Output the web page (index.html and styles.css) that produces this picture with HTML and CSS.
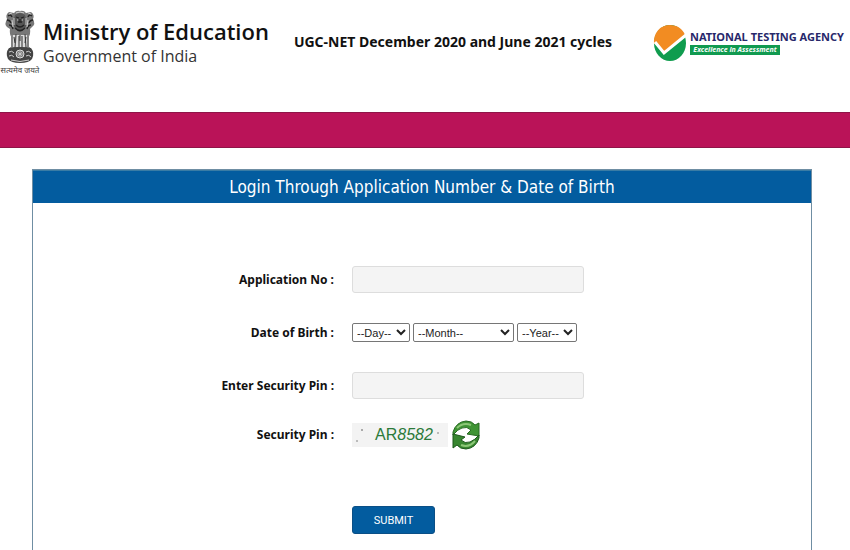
FILE: index.html
```
<!DOCTYPE html>
<html lang="en">
<head>
    <meta charset="utf-8">
    <title>UGC-NET Login</title>
    <link rel="stylesheet" href="styles.css">
</head>
<body>
    <header class="header">
        <div class="ministry">
            <div class="emblem">
                <svg viewBox="0 0 32 54" width="32" height="54" aria-hidden="true">
                    <!-- lions -->
                    <path d="M10 3Q12 0 16 1Q20 0 22 3L27 2Q31 5 29 9Q32 14 28 17L26 19Q27 24 24 28H8Q5 24 6 19L3 17Q0 14 3 9Q1 5 5 2Z" fill="#777"/>
                    <path d="M11 5Q16 1 21 5L23 12Q22 20 16 22Q10 20 9 12Z" fill="#555"/>
                    <path d="M12 7l3 1M17 8l3-1M14 12h4M16 9v3M12 15q4 4 8 0M11 18q5 5 10 0M4 6q3-2 4 1M28 6q-3-2-4 1M3 10q3 0 4 3M29 10q-3 0-4 3M5 15q3 0 4 4M27 15q-3 0-4 4" fill="none" stroke="#222" stroke-width="1.3"/>
                    <path d="M12 3q4-2 8 0M5 4l3-1M24 3l3 1M10 8v7M22 8v7M13 10h1M18 10h1M8 10l1 7M24 10l-1 7" fill="none" stroke="#ccc" stroke-width="1"/>
                    <!-- legs -->
                    <path d="M7 25h18v14H7z" fill="#ddd"/>
                    <path d="M8 25v12M12 24l-1 14M15 26v12M18 26v12M21 24l1 14M24 25v12" stroke="#555" stroke-width="1.3"/>
                    <path d="M10 27l1 6M16 25v6M22 27l-1 6M6 38h20" stroke="#333" stroke-width="1"/>
                    <!-- base with the wheel -->
                    <path d="M5 38Q16 36 27 38Q31 43 28 49Q25 53 16 53Q7 53 4 49Q1 43 5 38Z" fill="#444"/>
                    <circle cx="16" cy="44" r="4" fill="#777" stroke="#ddd"/>
                    <path d="M16 41v6M13 44h6M14 42l4 4M18 42l-4 4" stroke="#ddd" stroke-width=".6"/>
                    <path d="M5 42q3-2 5 1M5 46q3-2 5 1M22 42q3-2 5 1M22 46q3-2 5 1M7 50q9 3 18 0" fill="none" stroke="#ccc"/>
                </svg>
                <span class="motto" lang="hi">सत्यमेव जयते</span>
            </div>
            <div>
                <div class="ministry-name">Ministry of Education</div>
                <div class="ministry-gov">Government of India</div>
            </div>
        </div>
        <h1 class="exam-title">UGC-NET December 2020 and June 2021 cycles</h1>
        <div class="agency">
            <svg viewBox="0 0 34 38" width="34" height="38" aria-hidden="true">
                <ellipse cx="17" cy="19" rx="16" ry="18" fill="#0f9c4e"/>
                <path d="M1 20C0 9 7 1 17 1C24 1 30 5 32 11L11 28L3 19Z" fill="#f28c22"/>
                <path d="M2 18L11 29L33 11" fill="none" stroke="#fff" stroke-width="3"/>
            </svg>
            <div>
                <div class="agency-name">NATIONAL TESTING AGENCY</div>
                <div class="agency-tag">Excellence in Assessment</div>
            </div>
        </div>
    </header>

    <div class="band"></div>

    <main class="login">
        <h2 class="login-title">Login Through Application Number &amp; Date of Birth</h2>
        <form class="login-form">
            <div class="row">
                <label class="label" for="app-no">Application No :</label>
                <input class="text-box" type="text" id="app-no">
            </div>
            <div class="row">
                <label class="label" for="day">Date of Birth :</label>
                <div class="dob">
                    <select class="day" id="day"><option>--Day--</option></select>
                    <select class="month" aria-label="Month"><option>--Month--</option></select>
                    <select class="year" aria-label="Year"><option>--Year--</option></select>
                </div>
            </div>
            <div class="row row-pin">
                <label class="label" for="pin">Enter Security Pin :</label>
                <input class="text-box" type="text" id="pin">
            </div>
            <div class="row">
                <span class="label">Security Pin :</span>
                <div class="captcha">
                    <div class="captcha-code">AR<i>8582</i></div>
                    <button class="refresh" type="button" aria-label="Refresh pin">
                        <svg viewBox="0 0 28 30" width="28" height="30">
                            <path d="M1 12Q4 2 14 1Q20 1 23 5L27 3V16L15 14L19 10Q15 6 10 8Q6 9 1 15Z" fill="#3f9434" stroke="#286b22"/>
                            <path d="M27 18Q24 28 14 29Q8 29 5 25L1 28V14L13 17L9 20Q13 24 18 22Q23 20 27 15Z" fill="#37862f" stroke="#1d591b"/>
                            <path d="M5 8Q11 2 19 5M9 25Q17 28 23 21" fill="none" stroke="#8cc777" stroke-width="2"/>
                        </svg>
                    </button>
                </div>
            </div>
            <div class="row row-submit">
                <button class="submit" type="button">SUBMIT</button>
            </div>
        </form>
    </main>
</body>
</html>
```
FILE: styles.css
```
* {
    box-sizing: border-box;
}

body {
    margin: 0;
    min-height: 100vh;
    display: flex;
    flex-direction: column;
    background-color: #fff;
    color: #111;
    font-family: "Noto Sans", sans-serif;
}

.header {
    display: flex;
    align-items: flex-start;
    padding: 10px 6px 36px 0;
}

.ministry {
    display: flex;
    gap: 3px;
}

.emblem {
    display: flex;
    flex-direction: column;
    align-items: center;
    width: 40px;
}

.motto {
    font-size: 8px;
    line-height: 12px;
    color: #444;
    white-space: nowrap;
}

.ministry-name {
    margin-top: 6px;
    font-family: "Open Sans", sans-serif;
    font-size: 22px;
    line-height: 30px;
    font-weight: 600;
}

.ministry-gov {
    font-family: "Open Sans", sans-serif;
    font-size: 16px;
    line-height: 20px;
    color: #333;
}

.exam-title {
    margin: 24px 0 0 25px;
    font-size: 14px;
    line-height: 16px;
}

.agency {
    display: flex;
    gap: 3px;
    margin: 14px 0 0 auto;
}

.agency-name {
    margin-top: 5px;
    font-size: 11px;
    line-height: 16px;
    font-weight: bold;
    color: #27286b;
}

.agency-tag {
    width: 90px;
    font-size: 7px;
    line-height: 10px;
    font-weight: bold;
    font-style: italic;
    text-align: center;
    white-space: nowrap;
    background-color: #119a50;
    color: #fff;
}

.band {
    height: 36px;
    background-color: #ba1358;
    border-top: 1px solid #8f1548;
    border-bottom: 1px solid #8f1548;
}

.login {
    flex: 1;
    display: flex;
    flex-direction: column;
    margin: 21px 38px 0 32px;
    border: 1px solid #6f8ea3;
    border-bottom: none;
}

.login-title {
    margin: 0;
    border-top: 1px solid #3a7ca5;
    background-color: #035c9f;
    color: #fff;
    font-family: "DejaVu Sans Condensed", "DejaVu Sans", sans-serif;
    font-size: 17px;
    line-height: 32px;
    font-weight: normal;
    text-align: center;
}

.login-form {
    padding-top: 63px;
}

.row {
    display: grid;
    grid-template-columns: 301px 1fr;
    column-gap: 18px;
    align-items: center;
    margin-bottom: 26px;
    min-height: 27px;
}

.row-pin {
    margin-bottom: 21px;
}

.label {
    font-size: 12px;
    line-height: 16px;
    font-weight: bold;
    text-align: right;
}

.text-box {
    width: 232px;
    height: 27px;
    border: 1px solid #ddd;
    border-radius: 3px;
    background-color: #f4f4f4;
}

.dob {
    display: flex;
    gap: 3px;
}

.dob select {
    height: 19px;
    padding: 0;
    border: 1px solid #767676;
    border-radius: 2px;
    background-color: #fff;
    color: #222;
    font-family: "Liberation Sans", Arial, sans-serif;
    font-size: 11px;
}

.dob .day {
    width: 58px;
}

.dob .month {
    width: 101px;
}

.dob .year {
    width: 60px;
}

.captcha {
    display: flex;
    align-items: center;
    gap: 4px;
}

.captcha-code {
    width: 96px;
    padding-left: 8px;
    background-color: #f3f3f3;
    /* noise specks */
    background-image:
        radial-gradient(circle at 10px 7px, #aaa 1px, transparent 1px),
        radial-gradient(circle at 5px 18px, #bbb 1px, transparent 1px),
        radial-gradient(circle at 86px 10px, #bbb 1px, transparent 1px);
    color: #2b7a3a;
    font-family: "Liberation Sans", Arial, sans-serif;
    font-size: 16px;
    line-height: 24px;
    text-align: center;
}

.refresh {
    padding: 0;
    border: none;
    background: none;
    cursor: pointer;
}

.refresh svg {
    display: block;
}

.row-submit {
    padding-top: 30px;
}

.submit {
    grid-column: 2;
    width: 83px;
    height: 28px;
    border: 1px solid #0b4f86;
    border-radius: 3px;
    background-color: #035c9f;
    color: #fff;
    font-family: Roboto, sans-serif;
    font-size: 11px;
    cursor: pointer;
}
```
